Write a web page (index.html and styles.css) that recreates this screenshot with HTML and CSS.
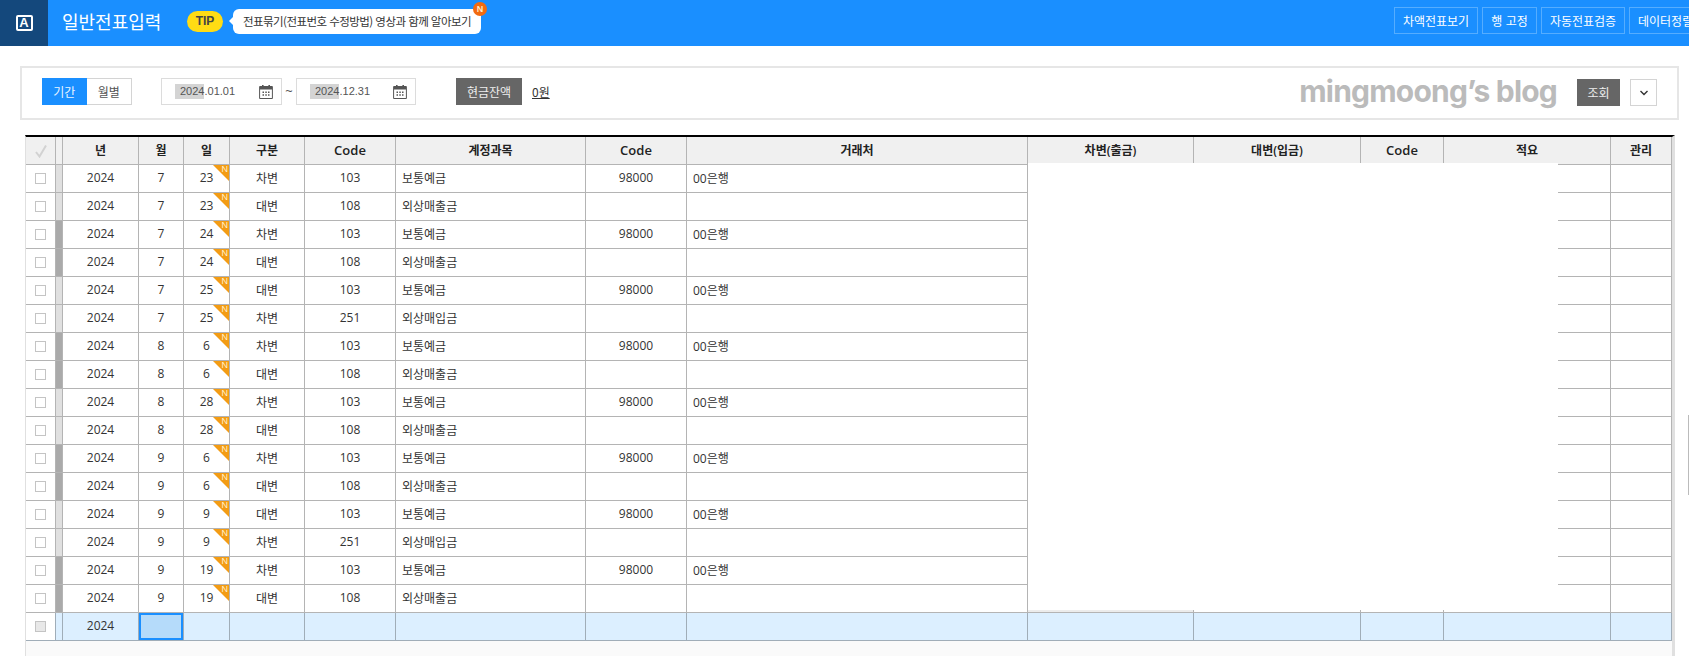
FILE: index.html
```html
<!DOCTYPE html>
<html lang="ko">
<head>
<meta charset="utf-8">
<title>일반전표입력</title>
<link rel="stylesheet" href="styles.css">
</head>
<body>
<header class="topbar">
  <div class="logo"><span class="logo-a">A</span></div>
  <h1 class="title">일반전표입력</h1>
  <span class="tip-pill">TIP</span>
  <div class="tip-bubble">전표묶기(전표번호 수정방법) 영상과 함께 알아보기<span class="tip-new">N</span></div>
  <nav class="top-actions">
    <button class="top-btn w84">차액전표보기</button>
    <button class="top-btn w55">행 고정</button>
    <button class="top-btn w84">자동전표검증</button>
    <button class="top-btn w84 start">데이터정렬</button>
  </nav>
</header>

<section class="panel">
  <div class="seg"><span class="seg-on">기간</span><span class="seg-off">월별</span></div>
  <div class="date d1"><span class="date-text"><span class="sel">2024</span>.01.01</span>
    <svg class="cal" viewBox="0 0 14 14"><path d="M3 0h1.6v2H3zM9.400 0H11v2H9.400z" fill="#555"/><path d="M.6 1.500h12.800v12H.6z" fill="#fff" stroke="#555"/><path d="M1 2h12v2.500H1z" fill="#555"/><path d="M3.500 6.500h1.500V8H3.500zM6.300 6.500h1.500V8H6.300zM9 6.500h1.500V8H9zM3.500 9.300h1.500v1.500H3.500zM6.300 9.300h1.500v1.500H6.300zM9 9.300h1.500v1.500H9z" fill="#555"/></svg>
  </div>
  <span class="tilde">~</span>
  <div class="date d2"><span class="date-text"><span class="sel">2024</span>.12.31</span>
    <svg class="cal" viewBox="0 0 14 14"><path d="M3 0h1.600v2H3zM9.400 0H11v2H9.400z" fill="#555"/><path d="M.6 1.500h12.800v12H.6z" fill="#fff" stroke="#555"/><path d="M1 2h12v2.500H1z" fill="#555"/><path d="M3.500 6.500h1.500V8H3.500zM6.300 6.500h1.500V8H6.300zM9 6.500h1.500V8H9zM3.500 9.300h1.500v1.500H3.500zM6.300 9.300h1.500v1.500H6.300zM9 9.300h1.500v1.500H9z" fill="#555"/></svg>
  </div>
  <button class="btn-dark cash">현금잔액</button>
  <a class="cash-val">0원</a>
  <span class="watermark">mingmoong’s blog</span>
  <button class="btn-dark search">조회</button>
  <button class="btn-chev"><svg viewBox="0 0 10 6" class="chev"><path d="M1.500 1l3.500 3.500L8.500 1" fill="none" stroke="#333" stroke-width="1.400"/></svg></button>
</section>

<main class="grid-wrap">
  <table class="grid">
    <colgroup>
      <col class="c30"><col class="c7"><col class="c76"><col class="c45"><col class="c46"><col class="c75"><col class="c91"><col class="c190"><col class="c101"><col class="c341"><col class="c166"><col class="c167"><col class="c83"><col class="c167"><col class="c61">
    </colgroup>
    <thead>
      <tr>
        <th><svg class="chk" viewBox="0 0 12 14"><path d="M1 8l3.500 4.500L11 1.500" fill="none" stroke="#d2d2d2" stroke-width="2"/></svg></th>
        <th></th><th>년</th><th>월</th><th>일</th><th>구분</th><th class="code">Code</th><th>계정과목</th><th class="code">Code</th><th>거래처</th><th>차변(출금)</th><th>대변(입금)</th><th class="code">Code</th><th>적요</th><th>관리</th>
      </tr>
    </thead>
    <tbody>
      <tr class="light"><td><i class="box"></i></td><td></td><td>2024</td><td>7</td><td class="day">23<b class="new">N</b></td><td>차변</td><td>103</td><td class="l">보통예금</td><td>98000</td><td class="l">00은행</td><td></td><td></td><td></td><td></td><td></td></tr>
      <tr class="light"><td><i class="box"></i></td><td></td><td>2024</td><td>7</td><td class="day">23<b class="new">N</b></td><td>대변</td><td>108</td><td class="l">외상매출금</td><td></td><td class="l"></td><td></td><td></td><td></td><td></td><td></td></tr>
      <tr class="dark"><td><i class="box"></i></td><td></td><td>2024</td><td>7</td><td class="day">24<b class="new">N</b></td><td>차변</td><td>103</td><td class="l">보통예금</td><td>98000</td><td class="l">00은행</td><td></td><td></td><td></td><td></td><td></td></tr>
      <tr class="dark"><td><i class="box"></i></td><td></td><td>2024</td><td>7</td><td class="day">24<b class="new">N</b></td><td>대변</td><td>108</td><td class="l">외상매출금</td><td></td><td class="l"></td><td></td><td></td><td></td><td></td><td></td></tr>
      <tr class="light"><td><i class="box"></i></td><td></td><td>2024</td><td>7</td><td class="day">25<b class="new">N</b></td><td>대변</td><td>103</td><td class="l">보통예금</td><td>98000</td><td class="l">00은행</td><td></td><td></td><td></td><td></td><td></td></tr>
      <tr class="light"><td><i class="box"></i></td><td></td><td>2024</td><td>7</td><td class="day">25<b class="new">N</b></td><td>차변</td><td>251</td><td class="l">외상매입금</td><td></td><td class="l"></td><td></td><td></td><td></td><td></td><td></td></tr>
      <tr class="dark"><td><i class="box"></i></td><td></td><td>2024</td><td>8</td><td class="day">6<b class="new">N</b></td><td>차변</td><td>103</td><td class="l">보통예금</td><td>98000</td><td class="l">00은행</td><td></td><td></td><td></td><td></td><td></td></tr>
      <tr class="dark"><td><i class="box"></i></td><td></td><td>2024</td><td>8</td><td class="day">6<b class="new">N</b></td><td>대변</td><td>108</td><td class="l">외상매출금</td><td></td><td class="l"></td><td></td><td></td><td></td><td></td><td></td></tr>
      <tr class="light"><td><i class="box"></i></td><td></td><td>2024</td><td>8</td><td class="day">28<b class="new">N</b></td><td>차변</td><td>103</td><td class="l">보통예금</td><td>98000</td><td class="l">00은행</td><td></td><td></td><td></td><td></td><td></td></tr>
      <tr class="light"><td><i class="box"></i></td><td></td><td>2024</td><td>8</td><td class="day">28<b class="new">N</b></td><td>대변</td><td>108</td><td class="l">외상매출금</td><td></td><td class="l"></td><td></td><td></td><td></td><td></td><td></td></tr>
      <tr class="dark"><td><i class="box"></i></td><td></td><td>2024</td><td>9</td><td class="day">6<b class="new">N</b></td><td>차변</td><td>103</td><td class="l">보통예금</td><td>98000</td><td class="l">00은행</td><td></td><td></td><td></td><td></td><td></td></tr>
      <tr class="dark"><td><i class="box"></i></td><td></td><td>2024</td><td>9</td><td class="day">6<b class="new">N</b></td><td>대변</td><td>108</td><td class="l">외상매출금</td><td></td><td class="l"></td><td></td><td></td><td></td><td></td><td></td></tr>
      <tr class="light"><td><i class="box"></i></td><td></td><td>2024</td><td>9</td><td class="day">9<b class="new">N</b></td><td>대변</td><td>103</td><td class="l">보통예금</td><td>98000</td><td class="l">00은행</td><td></td><td></td><td></td><td></td><td></td></tr>
      <tr class="light"><td><i class="box"></i></td><td></td><td>2024</td><td>9</td><td class="day">9<b class="new">N</b></td><td>차변</td><td>251</td><td class="l">외상매입금</td><td></td><td class="l"></td><td></td><td></td><td></td><td></td><td></td></tr>
      <tr class="dark"><td><i class="box"></i></td><td></td><td>2024</td><td>9</td><td class="day">19<b class="new">N</b></td><td>차변</td><td>103</td><td class="l">보통예금</td><td>98000</td><td class="l">00은행</td><td></td><td></td><td></td><td></td><td></td></tr>
      <tr class="dark"><td><i class="box"></i></td><td></td><td>2024</td><td>9</td><td class="day">19<b class="new">N</b></td><td>대변</td><td>108</td><td class="l">외상매출금</td><td></td><td class="l"></td><td class="tint"></td><td></td><td></td><td></td><td></td></tr>
      <tr class="active"><td><i class="box box-off"></i></td><td></td><td>2024</td><td class="focus"></td><td></td><td></td><td></td><td class="l"></td><td></td><td class="l"></td><td></td><td></td><td></td><td></td><td></td></tr>
    </tbody>
  </table>
  <div class="mask"></div>
</main>
<div class="edge-mark"></div>
</body>
</html>
```

FILE: styles.css
```css
* { box-sizing: border-box; }
html, body { margin: 0; height: 100%; }
body {
  height: 656px;
  overflow: hidden;
  display: flex;
  flex-direction: column;
  position: relative;
  background: #fff;
  color: #333;
  font: 12px "Open Sans", "Noto Sans CJK KR", sans-serif;
}
button { font: inherit; padding: 0; cursor: pointer; }

.topbar {
  height: 46px;
  flex: none;
  display: flex;
  align-items: center;
  background: #1a8fff;
  color: #fff;
  white-space: nowrap;
}
.logo {
  width: 48px;
  height: 46px;
  flex: none;
  background: #14487c;
  display: flex;
  align-items: center;
  justify-content: center;
}
.logo-a {
  width: 17px;
  height: 16px;
  border: 2px solid #fff;
  border-radius: 2px;
  font: 700 13px/12px "Liberation Sans", sans-serif;
  text-align: center;
}
.title {
  margin: 0 0 4px 14px;
  width: 125px;
  flex: none;
  font: 400 18px "Noto Sans CJK KR", sans-serif;
}
.tip-pill {
  width: 36px;
  height: 21px;
  border-radius: 11px;
  background: #ffdc14;
  color: #444;
  font: 700 12px/21px "Liberation Sans", sans-serif;
  text-align: center;
  flex: none;
  margin-bottom: 3px;
}
.tip-bubble {
  position: relative;
  margin: 0 0 3px 10px;
  width: 248px;
  height: 25px;
  flex: none;
  border-radius: 6px;
  background: #fff;
  color: #333;
  font: 11.5px/25px "Noto Sans CJK KR", sans-serif;
  letter-spacing: -.55px;
  padding-left: 10px;
}
.tip-bubble::before {
  content: "";
  position: absolute;
  left: -4px;
  top: 8px;
  border-style: solid;
  border-width: 4px 4px 4px 0;
  border-color: transparent #fff transparent transparent;
}
.tip-new {
  position: absolute;
  right: -6px;
  top: -7px;
  width: 14px;
  height: 14px;
  border-radius: 50%;
  background: #f26a10;
  color: #ffe9c8;
  font: 700 9px/14px "Liberation Sans", sans-serif;
  text-align: center;
  letter-spacing: 0;
}
.top-actions {
  margin-left: auto;
  margin-right: -24px;
  display: flex;
  gap: 4px;
  flex: none;
  margin-bottom: 5px;
}
.top-btn {
  height: 27px;
  border: 1px solid #55adff;
  background: transparent;
  color: #fff;
  font: 12px "Noto Sans CJK KR", sans-serif;
  white-space: nowrap;
  overflow: hidden;
}
.top-btn.start { text-align: left; padding-left: 8px; }
.w84 { width: 84px; }
.w55 { width: 55px; }

.panel {
  flex: none;
  margin: 20px 10px 15px 20px;
  height: 54px;
  border: 2px solid #e6e6e6;
  padding: 10px 20px 0;
  display: flex;
  align-items: flex-start;
}
.seg { display: flex; height: 27px; width: 90px; flex: none; }
.seg-on, .seg-off { flex: 1; text-align: center; line-height: 27px; font-family: "Noto Sans CJK KR", sans-serif; }
.seg-on { background: #1a8fff; color: #e8f4ff; }
.seg-off { border: 1px solid #d4d4d4; border-left: 0; color: #555; line-height: 25px; }
.date {
  height: 27px;
  border: 1px solid #dcdcdc;
  display: flex;
  align-items: center;
  justify-content: space-between;
  padding: 0 8px 0 13px;
  flex: none;
}
.d1 { width: 121px; margin-left: 29px; }
.d2 { width: 120px; }
.date-text { font: 11px/15px "Liberation Sans", sans-serif; color: #555; }
.sel { display: inline-block; background: #d4d4d4; padding-left: 5px; }
.cal { width: 14px; height: 14px; }
.tilde { width: 14px; flex: none; text-align: center; line-height: 27px; color: #555; font-size: 13px; }
.btn-dark {
  height: 27px;
  border: 0;
  background: #666;
  color: #eee;
  font: 12px "Noto Sans CJK KR", sans-serif;
  flex: none;
}
.cash { width: 66px; margin-left: 40px; }
.cash-val {
  margin-left: 10px;
  line-height: 27px;
  color: #333;
  text-decoration: underline;
  font-family: "Noto Sans CJK KR", sans-serif;
  flex: none;
}
.watermark {
  margin-left: auto;
  margin-right: 20px;
  color: #bbb;
  font: 700 30px/27px Inter, sans-serif;
  letter-spacing: -.8px;
  flex: none;
}
.search { width: 43px; margin-top: 1px; }
.btn-chev {
  width: 27px;
  height: 27px;
  margin: 1px 0 0 10px;
  border: 1px solid #d4d4d4;
  background: #fff;
  display: flex;
  align-items: center;
  justify-content: center;
  flex: none;
}
.chev { width: 10px; height: 6px; }

.grid-wrap {
  position: relative;
  flex: 1;
  width: 1650px;
  margin-left: 25px;
  border-top: 2px solid #000;
  border-left: 1px solid #e0e0e0;
  border-right: 3px solid #e0e0e0;
  background: #fafafa;
}
.grid {
  width: 1646px;
  table-layout: fixed;
  border-collapse: separate;
  border-spacing: 0;
  color: #333;
}
.c30 { width: 30px; } .c7 { width: 7px; } .c76 { width: 76px; } .c45 { width: 45px; }
.c46 { width: 46px; } .c75 { width: 75px; } .c91 { width: 91px; } .c190 { width: 190px; }
.c101 { width: 101px; } .c341 { width: 341px; } .c166 { width: 166px; } .c167 { width: 167px; }
.c83 { width: 83px; } .c61 { width: 61px; }
.grid th, .grid td {
  height: 28px;
  padding: 0;
  border-right: 1px solid #b4b4b4;
  border-bottom: 1px solid #b4b4b4;
  text-align: center;
  background: #fff;
  overflow: hidden;
  white-space: nowrap;
}
.grid th {
  background: #f0f0f0;
  color: #222;
  font-weight: 600;
  padding-bottom: 2px;
}
.grid th.code { font-size: 13px; }
.grid td { padding-bottom: 2px; }
.grid td.l { text-align: left; padding-left: 6px; }
.chk { width: 12px; height: 14px; display: block; margin: 2px auto 0; }
.box {
  display: block;
  width: 11px;
  height: 11px;
  margin: 2px auto 0;
  border: 1px solid #c4c4c4;
  background: #fff;
}
.box-off { background: #e8e8e8; }
.light td:nth-child(2) { background: #e0e0e0; }
.dark td:nth-child(2) { background: #aaa; }
.day { position: relative; }
.new {
  position: absolute;
  top: 0;
  right: 0;
  width: 16px;
  height: 16px;
  background: #f39c14;
  clip-path: polygon(0 0, 100% 0, 100% 100%);
  color: #fff0cc;
  font: 400 9px/9px "Liberation Sans", sans-serif;
  text-align: right;
  padding-right: 1px;
}
.grid td.tint { background: #ececec; }
.active td { background: #dcefff; border-color: #a0adb8; }
.active td:first-child { background: #fff; }
.grid td.focus {
  background: #b5dbfa;
  box-shadow: inset 0 0 0 2px #1a8fff;
}
.mask {
  position: absolute;
  left: 1002px;
  top: 26px;
  width: 530px;
  height: 447px;
  background: #fff;
}
.edge-mark {
  position: absolute;
  left: 1688px;
  top: 415px;
  width: 1px;
  height: 80px;
  background: #bbb;
}
```
